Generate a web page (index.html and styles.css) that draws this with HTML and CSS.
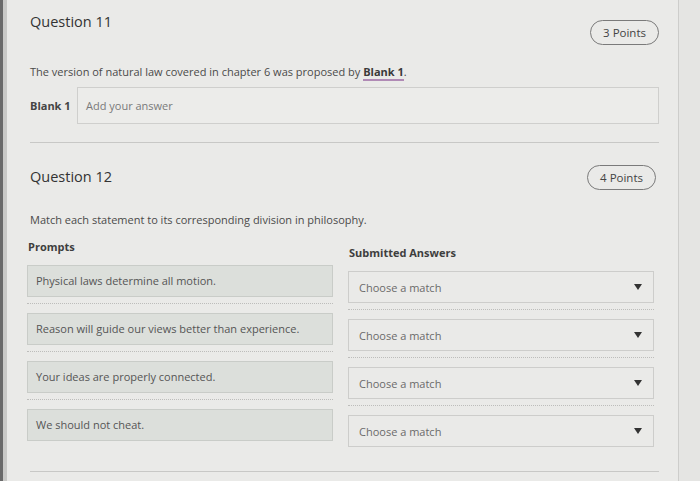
FILE: index.html
```html
<!DOCTYPE html>
<html lang="en">
<head>
  <meta charset="UTF-8">
  <meta name="viewport" content="width=device-width, initial-scale=1.0">
  <title>Quiz</title>
  <link rel="stylesheet" href="styles.css">
</head>
<body>
  <div id="tela">
    <div class="borda-escura"></div>
    <div class="borda-clara"></div>

    <div id="conteudo">

      <div class="questao">
        <div class="cabecalho">
          <h2 class="titulo">Question 11</h2>
          <span class="pontos">3 Points</span>
        </div>
        <p class="enunciado">The version of natural law covered in chapter 6 was proposed by <span class="lacuna">Blank 1</span>.</p>
        <div class="linha-resposta">
          <label class="rotulo">Blank 1</label>
          <div class="campo">Add your answer</div>
        </div>
      </div>

      <div class="questao q12">
        <div class="cabecalho">
          <h2 class="titulo">Question 12</h2>
          <span class="pontos p12">4 Points</span>
        </div>
        <p class="enunciado">Match each statement to its corresponding division in philosophy.</p>

        <div class="associacao">
          <div class="coluna">
            <h3 class="subtitulo">Prompts</h3>
            <div class="item"><div class="prompt">Physical laws determine all motion.</div></div>
            <div class="item"><div class="prompt">Reason will guide our views better than experience.</div></div>
            <div class="item"><div class="prompt">Your ideas are properly connected.</div></div>
            <div class="item ultimo"><div class="prompt">We should not cheat.</div></div>
          </div>
          <div class="coluna respostas">
            <h3 class="subtitulo">Submitted Answers</h3>
            <div class="item"><div class="escolha">Choose a match <span class="seta"></span></div></div>
            <div class="item"><div class="escolha">Choose a match <span class="seta"></span></div></div>
            <div class="item"><div class="escolha">Choose a match <span class="seta"></span></div></div>
            <div class="item ultimo"><div class="escolha">Choose a match <span class="seta"></span></div></div>
          </div>
        </div>
      </div>

    </div>
    <div class="lateral"></div>
  </div>
</body>
</html>
```

FILE: styles.css
```css
* {
  margin: 0;
  padding: 0;
  box-sizing: border-box;
}

body {
  background-color: #eaeae8;
  font-family: "Open Sans", "Liberation Sans", sans-serif;
  color: #4a4a4a;
}

#tela {
  display: flex;
  height: 481px;
  overflow: hidden;
}

.borda-escura {
  width: 3px;
  background-color: #6a6a6a;
}

.borda-clara {
  width: 4px;
  background-color: #c9c9c7;
}

#conteudo {
  width: 672px;
  padding: 12px 19px 0 23px;
  border-right: 1px solid #cdcdcb;
}

.lateral {
  flex: 1;
  background-color: #e5e5e3;
}

.questao {
  border-bottom: 1px solid #c8c8c6;
  padding-bottom: 18px;
}

.q12 {
  margin-top: 24px;
  padding-bottom: 9px;
}

.cabecalho {
  display: flex;
  justify-content: space-between;
  align-items: flex-start;
}

.titulo {
  font-size: 14.5px;
  font-weight: normal;
  color: #333;
  line-height: 20px;
}

.pontos {
  font-size: 11.5px;
  color: #444;
  border: 1px solid #7a7a7a;
  border-radius: 14px;
  padding: 4px 12px;
  margin-top: 8px;
}

.p12 {
  margin-top: -2px;
  margin-right: 3px;
}

.enunciado {
  font-size: 11px;
  margin-top: 19px;
}

.q12 .enunciado {
  margin-top: 22px;
}

.lacuna {
  font-weight: bold;
  color: #3a3a3a;
  border-bottom: 2px solid #b08ab5;
}

.linha-resposta {
  display: flex;
  align-items: center;
  margin-top: 8px;
}

.rotulo {
  font-size: 11px;
  font-weight: bold;
  color: #444;
  width: 47px;
}

.campo {
  flex: 1;
  height: 37px;
  border: 1px solid #cfcfcd;
  background-color: #ececea;
  font-size: 11px;
  color: #7a7a7a;
  padding: 10px 8px;
}

.associacao {
  display: flex;
  gap: 15px;
  margin: 12px 5px 0 -3px;
}

.coluna {
  flex: 1;
}

.respostas {
  padding-top: 6px;
}

.subtitulo {
  font-size: 11px;
  font-weight: bold;
  color: #3e3e3e;
  height: 26px;
  padding-left: 1px;
}

.item {
  border-bottom: 1px dotted #bdbdbb;
  padding-bottom: 6px;
  margin-bottom: 9px;
}

.item.ultimo {
  border-bottom: none;
}

.prompt {
  height: 32px;
  background-color: #dcdfdb;
  border: 1px solid #c9ccc8;
  font-size: 11px;
  color: #555;
  padding: 7px 8px;
}

.escolha {
  height: 32px;
  background-color: #eaeae8;
  border: 1px solid #cdcdcb;
  font-size: 11px;
  color: #6a6a6a;
  padding: 8px 11px 8px 10px;
  display: flex;
  justify-content: space-between;
  align-items: center;
}

.seta {
  width: 0;
  height: 0;
  border-left: 4px solid transparent;
  border-right: 4px solid transparent;
  border-top: 6px solid #333;
}
```
